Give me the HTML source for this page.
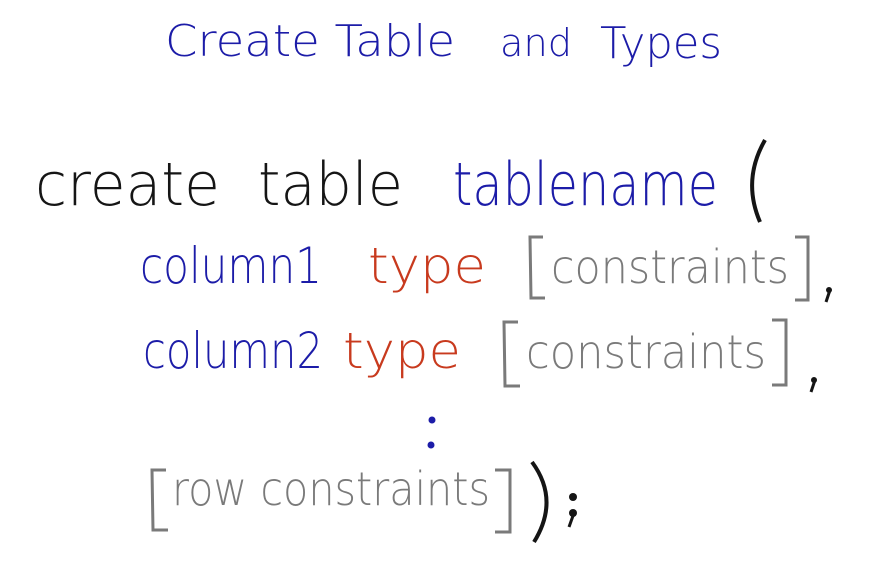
<!DOCTYPE html>
<html><head><meta charset="utf-8"><style>
html,body{margin:0;padding:0;background:#fff;}
svg{display:block}
text{font-family:"DejaVu Sans","Liberation Sans",sans-serif;font-weight:200;}
</style></head><body>
<svg width="888" height="572" viewBox="0 0 888 572" xmlns="http://www.w3.org/2000/svg">
<rect width="888" height="572" fill="#fff"/>
<g fill="#1c1ca8" font-size="44">
<text x="165" y="56" textLength="290" lengthAdjust="spacingAndGlyphs">Create Table</text>
<text x="500" y="56" textLength="72" lengthAdjust="spacingAndGlyphs" font-size="38">and</text>
<text x="600" y="58" textLength="122" lengthAdjust="spacingAndGlyphs">Types</text>
</g>
<g font-size="60">
<text x="35" y="205" fill="#151515" textLength="185" lengthAdjust="spacingAndGlyphs">create</text>
<text x="258" y="205" fill="#151515" textLength="145" lengthAdjust="spacingAndGlyphs">table</text>
<text x="453" y="205" fill="#1c1ca8" textLength="265" lengthAdjust="spacingAndGlyphs">tablename</text>
</g>
<path d="M765 140 Q742 180 760 222" stroke="#151515" stroke-width="4" fill="none"/>
<g font-size="50">
<text x="140" y="283" fill="#1c1ca8" textLength="182" lengthAdjust="spacingAndGlyphs">column1</text>
<text x="368" y="283" fill="#c83a1e" textLength="118" lengthAdjust="spacingAndGlyphs">type</text>
<text x="551" y="283" fill="#7a7a7a" textLength="238" lengthAdjust="spacingAndGlyphs" font-size="46">constraints</text>
<text x="143" y="368" fill="#1c1ca8" textLength="180" lengthAdjust="spacingAndGlyphs">column2</text>
<text x="343" y="368" fill="#c83a1e" textLength="118" lengthAdjust="spacingAndGlyphs">type</text>
<text x="526" y="368" fill="#7a7a7a" textLength="240" lengthAdjust="spacingAndGlyphs" font-size="46">constraints</text>
<text x="172" y="505" fill="#7a7a7a" textLength="318" lengthAdjust="spacingAndGlyphs" font-size="46">row constraints</text>
</g>
<g stroke="#7a7a7a" stroke-width="3" fill="none">
<path d="M543 237 L530 237 L531 298 L545 298"/>
<path d="M795 237 L808 237 L808 300 L795 300"/>
<path d="M518 322 L504 322 L505 386 L520 386"/>
<path d="M772 320 L786 320 L786 385 L772 385"/>
<path d="M166 470 L152 470 L153 530 L168 530"/>
<path d="M495 470 L510 470 L510 532 L495 532"/>
</g>
<g fill="#151515">
<circle cx="829" cy="290" r="3"/><path d="M830 290 L826 302" stroke="#151515" stroke-width="3"/>
<circle cx="814" cy="380" r="3"/><path d="M815 380 L811 392" stroke="#151515" stroke-width="3"/>
<circle cx="573" cy="497" r="4"/><circle cx="573" cy="513" r="4"/><path d="M574 513 L569 527" stroke="#151515" stroke-width="3"/>
</g>
<path d="M532 462 Q560 500 534 542" stroke="#151515" stroke-width="4" fill="none"/>
<g fill="#1c1ca8"><circle cx="432" cy="420" r="3.5"/><circle cx="431" cy="445" r="3.5"/></g>
</svg>
</body></html>
